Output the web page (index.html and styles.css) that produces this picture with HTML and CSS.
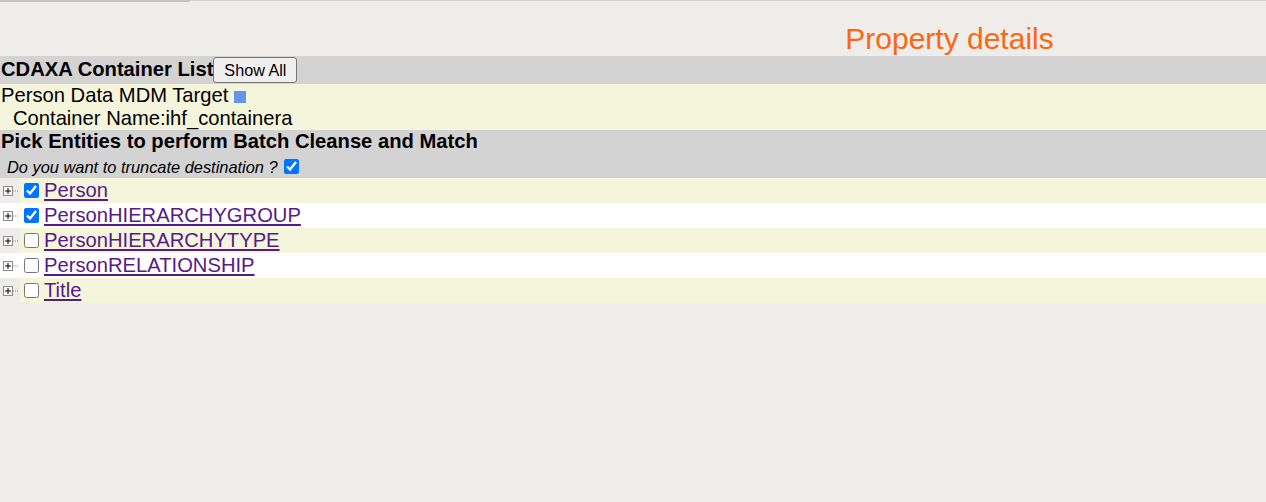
FILE: index.html
```html
<!DOCTYPE html>
<html>
<head>
<meta charset="utf-8">
<link rel="stylesheet" href="styles.css">
</head>
<body>
<div class="topline"><div class="topline-seg"></div></div>
<div class="title-row">
  <div class="title-left"></div>
  <div class="title-right">Property details</div>
</div>
<div class="bar header-bar">
  <span class="bar-title">CDAXA Container List</span><button class="btn">Show All</button>
</div>
<div class="target">
  <div class="target-line">Person Data MDM Target <span class="square"></span></div>
  <div class="target-line indent">Container Name:ihf_containera</div>
</div>
<div class="pick">
  <div class="pick-title">Pick Entities to perform Batch Cleanse and Match</div>
  <div class="pick-q"><i>Do you want to truncate destination ?</i> <input type="checkbox" class="cb" checked></div>
</div>
<div class="tree">
  <div class="row odd">
    <span class="exp"><svg width="20" height="12" viewBox="0 0 20 12"><rect x="3.5" y="1.5" width="9" height="9" fill="#fff" stroke="#8c8c8c"/><path d="M5 6h6M8 3v6" stroke="#000" stroke-width="1"/><path d="M13 6h6" stroke="#8c8c8c" stroke-dasharray="1 1"/></svg></span>
    <span class="cell"><input type="checkbox" class="cb" checked><a href="#" class="link">Person</a></span>
  </div>
  <div class="row even">
    <span class="exp"><svg width="20" height="12" viewBox="0 0 20 12"><rect x="3.5" y="1.5" width="9" height="9" fill="#fff" stroke="#8c8c8c"/><path d="M5 6h6M8 3v6" stroke="#000" stroke-width="1"/><path d="M13 6h6" stroke="#8c8c8c" stroke-dasharray="1 1"/></svg></span>
    <span class="cell"><input type="checkbox" class="cb" checked><a href="#" class="link">PersonHIERARCHYGROUP</a></span>
  </div>
  <div class="row odd">
    <span class="exp"><svg width="20" height="12" viewBox="0 0 20 12"><rect x="3.5" y="1.5" width="9" height="9" fill="#fff" stroke="#8c8c8c"/><path d="M5 6h6M8 3v6" stroke="#000" stroke-width="1"/><path d="M13 6h6" stroke="#8c8c8c" stroke-dasharray="1 1"/></svg></span>
    <span class="cell"><input type="checkbox" class="cb"><a href="#" class="link">PersonHIERARCHYTYPE</a></span>
  </div>
  <div class="row even">
    <span class="exp"><svg width="20" height="12" viewBox="0 0 20 12"><rect x="3.5" y="1.5" width="9" height="9" fill="#fff" stroke="#8c8c8c"/><path d="M5 6h6M8 3v6" stroke="#000" stroke-width="1"/><path d="M13 6h6" stroke="#8c8c8c" stroke-dasharray="1 1"/></svg></span>
    <span class="cell"><input type="checkbox" class="cb"><a href="#" class="link">PersonRELATIONSHIP</a></span>
  </div>
  <div class="row odd">
    <span class="exp"><svg width="20" height="12" viewBox="0 0 20 12"><rect x="3.5" y="1.5" width="9" height="9" fill="#fff" stroke="#8c8c8c"/><path d="M5 6h6M8 3v6" stroke="#000" stroke-width="1"/><path d="M13 6h6" stroke="#8c8c8c" stroke-dasharray="1 1"/></svg></span>
    <span class="cell"><input type="checkbox" class="cb"><a href="#" class="link">Title</a></span>
  </div>
</div>
</body>
</html>
```
FILE: styles.css
```css
html, body {
  margin: 0;
  padding: 0;
  background: #eeede9;
  font-family: "Liberation Sans", Arial, sans-serif;
  color: #000;
}
.topline {
  height: 1px;
  background: #d4d4d4;
}
.topline-seg {
  width: 190px;
  height: 2px;
  background: #c4c4c4;
}
.title-row {
  display: grid;
  grid-template-columns: 1fr 1fr;
  height: 55px;
}
.title-right {
  text-align: center;
  color: #ff6611;
  font-size: 30px;
  line-height: 34px;
  padding-top: 21px;
}
.header-bar {
  background: #d3d3d3;
  height: 28px;
  display: flex;
  align-items: center;
}
.bar-title {
  font-weight: bold;
  font-size: 20.2px;
  padding-left: 1px;
  line-height: 24px;
  padding-bottom: 2px;
}
.btn {
  font-family: "Liberation Sans", Arial, sans-serif;
  font-size: 16.2px;
  height: 26px;
  padding: 0 10px;
  margin: 0;
  border: 1px solid #767676;
  border-radius: 3px;
  background: #efefef;
  color: #000;
}
.target {
  background: #f5f5dc;
  font-size: 20.2px;
  padding-left: 1px;
}
.target-line {
  height: 23px;
  line-height: 22px;
}
.indent {
  padding-left: 12px;
}
.square {
  display: inline-block;
  width: 12px;
  height: 12px;
  background: #6495ed;
  vertical-align: -1px;
}
.pick {
  background: #d3d3d3;
}
.pick-title {
  font-weight: bold;
  font-size: 20.2px;
  height: 24px;
  line-height: 22px;
  padding-left: 1px;
}
.pick-q {
  font-size: 16.4px;
  height: 24px;
  line-height: 24px;
  padding-left: 7px;
  padding-top: 1px;
  box-sizing: border-box;
  display: flex;
  align-items: center;
  gap: 6px;
}
.cb {
  width: 15px;
  height: 15px;
  margin: 0;
}
.tree {
  display: flex;
  flex-direction: column;
}
.row {
  display: flex;
  height: 25px;
}
.row.even {
  background: #ffffff;
}
.row.odd .cell {
  background: #f5f5dc;
}
.exp {
  width: 20px;
  display: flex;
  align-items: center;
}
.cell {
  flex: 1;
  display: flex;
  align-items: center;
  padding-left: 4px;
  gap: 5px;
}
.link {
  color: #551a8b;
  font-size: 20.2px;
  text-decoration: underline;
}
```
